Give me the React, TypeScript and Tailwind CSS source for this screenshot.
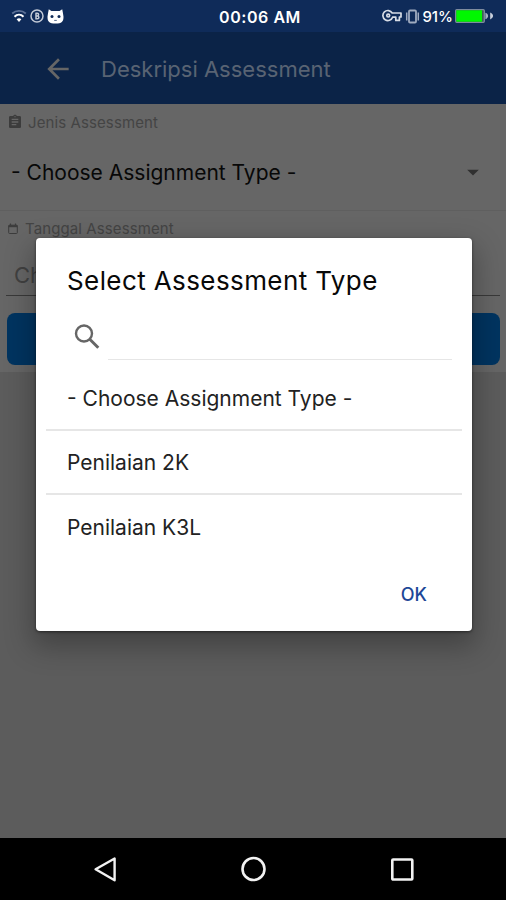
import { MdArrowBack, MdAssignment, MdArrowDropDown } from 'react-icons/md'

const options = ['- Choose Assignment Type -', 'Penilaian 2K', 'Penilaian K3L']

function WifiIcon() {
  return (
    <svg width="16" height="14" viewBox="0 0 16 14" fill="none">
      <path d="M1.2 4.5C5 1 11 1 14.8 4.5" stroke="#5b7096" strokeWidth="1.8" />
      <path d="M3.5 7.8c2.6-2.6 6.4-2.6 9 0" stroke="#fff" strokeWidth="2" />
      <path d="M5.6 10.3c1.5-1.3 3.3-1.3 4.8 0L8 13z" fill="#fff" />
    </svg>
  )
}

function DataIcon() {
  return (
    <svg width="14" height="14" viewBox="0 0 14 14" fill="none" stroke="#c3cad6">
      <circle cx="7" cy="7" r="6" strokeWidth="1.5" />
      <path d="M5.4 4.2h1.8a1.4 1.4 0 0 1 0 2.8H6M6 7h1.5a1.4 1.4 0 0 1 0 2.8H6V4" strokeWidth="1.5" />
    </svg>
  )
}

function RobotIcon() {
  return (
    <svg width="17" height="15" viewBox="0 0 17 15">
      <path d="M1.8.3 4.4 2h8.2L15.2.3l.7 3.4.6 4c0 5-1.7 6.8-8 6.8s-8-1.8-8-6.8l.6-4z" fill="#fff" />
      <circle cx="5" cy="7.6" r="1.5" fill="#0f2b59" />
      <circle cx="12" cy="7.6" r="1.5" fill="#0f2b59" />
      <path d="M7.2 11.4h2.6" stroke="#0f2b59" strokeWidth=".7" />
    </svg>
  )
}

function KeyIcon() {
  return (
    <svg width="20" height="14" viewBox="0 0 20 14" fill="none" stroke="#d8dde6" strokeWidth="1.7">
      <path d="M10.2 4H19v4h-1.6v3.4h-3.6V8.200h-3.200A5 5 0 1 1 10.2 4z" strokeLinejoin="round" />
      <circle cx="6.2" cy="6.6" r="1.4" />
    </svg>
  )
}

function VibrateIcon() {
  return (
    <svg width="15" height="15" viewBox="0 0 15 15" fill="none" stroke="#9fabc0">
      <rect x="4" y="1.5" width="7" height="12" rx="1" strokeWidth="1.8" />
      <path d="M1.7 3.5v8M13.3 3.5v8" strokeWidth="1.5" />
    </svg>
  )
}

function BatteryIcon() {
  return (
    <svg width="40" height="16" viewBox="0 0 40 16">
      <rect x=".7" y="1.7" width="28.6" height="12.6" rx="1" fill="#3c5c55" stroke="#7e8b9e" strokeWidth="1.3" />
      <rect x="1.3" y="2.3" width="25.7" height="11.4" fill="#00f800" />
      <path d="M30.4 4.8c3.6 1 3.6 5.400 0 6.400z" fill="#a6b0c2" />
      <path d="M35.200 4.600c3.800 1.600 3.800 5.200 0 6.800z" fill="#c9d0dc" />
    </svg>
  )
}

function CalendarIcon() {
  return (
    <svg width="12" height="12" viewBox="0 0 12 12" fill="none" stroke="#3c3c3c">
      <rect x="1.7" y="2.2" width="8.6" height="8.3" rx=".8" strokeWidth="1" />
      <path d="M1.5 3.2h9" strokeWidth="2" />
      <path d="M3.5.6v1.6M8.5.6v1.6" strokeWidth="1.2" />
    </svg>
  )
}

function SearchIcon() {
  return (
    <svg width="28" height="28" viewBox="0 0 28 28" fill="none" stroke="#666">
      <circle cx="11" cy="10.5" r="8" strokeWidth="2.4" />
      <path d="M16.5 16l8.8 8.8" strokeWidth="2.9" />
    </svg>
  )
}

export default function App() {
  return (
    <div className="relative flex h-[900px] w-[506px] flex-col overflow-hidden bg-[#5c5c5c] font-['Inter','Liberation_Sans',sans-serif]">
      <div className="grid h-8 grid-cols-3 items-center bg-[#0f2b59] text-white">
        <div className="flex items-center gap-[3px] pl-[11px]">
          <WifiIcon />
          <DataIcon />
          <RobotIcon />
        </div>
        <div className="pt-px pl-3.5 text-center text-base leading-none font-semibold tracking-[0.55px] whitespace-nowrap">00:06 AM</div>
        <div className="flex items-center justify-end pr-[11px]">
          <KeyIcon />
          <span className="ml-[3px]"><VibrateIcon /></span>
          <span className="ml-0.5 text-[15px] leading-none font-medium">91%</span>
          <span className="ml-0.5"><BatteryIcon /></span>
        </div>
      </div>

      <header className="flex h-[72px] items-center bg-[#0b2347] pt-0.5 pl-[42px] text-[#666]">
        <MdArrowBack size={32} />
        <h1 className="ml-[27px] text-[22px] text-[#596373]">Deskripsi Assessment</h1>
      </header>

      <main className="h-[268px] bg-[#666]">
        <div className="h-[107px] border-b border-[#5f5f5f]">
          <div className="flex h-[39px] items-center pl-[7px] text-[#3c3c3c]">
            <MdAssignment size={16} className="mb-[3px]" />
            <span className="ml-[5px] text-[15px] tracking-[0.1px] text-[#444]">Jenis Assessment</span>
          </div>
          <div className="flex h-[60px] items-center justify-between pr-[19px] pl-[11px]">
            <span className="text-[21px] text-[#080808]">- Choose Assignment Type -</span>
            <MdArrowDropDown size={28} className="mb-0.5 text-[#303030]" />
          </div>
        </div>
        <div className="flex h-9 items-center pl-[7px]">
          <CalendarIcon />
          <span className="ml-1.5 text-[15px] tracking-[0.1px] text-[#444]">Tanggal Assessment</span>
        </div>
        <div className="mx-1.5 flex h-[49px] items-center border-b-[1.5px] border-[#393939] pt-2 pl-2">
          <span className="text-[22px] text-[#414141]">Ch</span>
        </div>
        <div className="mr-1.5 ml-[7px] mt-[17px] h-[52px] rounded-lg bg-[#003460]" />
      </main>

      <div className="flex-1" />

      <nav className="flex h-[62px] items-center justify-between bg-black px-[92px]">
        <svg width="26" height="28" viewBox="0 0 26 28" fill="none" stroke="#f2f2f2" strokeWidth="2.4">
          <path d="M22.6 3.5v21.8L3.6 14.3z" strokeLinejoin="round" />
        </svg>
        <svg width="28" height="28" viewBox="0 0 28 28" fill="none" stroke="#f2f2f2" strokeWidth="2.6">
          <circle cx="13.5" cy="14" r="11" />
        </svg>
        <svg width="24" height="28" viewBox="0 0 24 28" fill="none" stroke="#f2f2f2" strokeWidth="2.6">
          <rect x="2.3" y="4.5" width="20" height="20" rx=".8" />
        </svg>
      </nav>

      <div role="dialog" className="absolute top-[238px] left-9 flex h-[393px] w-[436px] flex-col rounded bg-white shadow-[0_12px_28px_4px_rgba(0,0,0,0.28),0_1px_3px_rgba(0,0,0,0.5)]">
        <h2 className="mt-[27px] pl-[31px] text-[26px] leading-8 tracking-[0.4px] whitespace-nowrap text-[#080808]">Select Assessment Type</h2>
        <div className="mt-5 ml-[37px] flex h-[43px] items-start">
          <span className="mt-1.5"><SearchIcon /></span>
          <div className="ml-[7px] h-full w-[344px] border-b border-[#e6e6e6]" />
        </div>
        <ul className="mx-2.5 mt-[7px] divide-y-2 divide-[#e6e6e6]">
          {options.map((option) => (
            <li key={option} className="flex h-16 items-center pt-px pl-[21px] text-[21px] text-[#222]">
              {option}
            </li>
          ))}
        </ul>
        <button className="mt-[22px] mr-[45px] self-end text-[18px] leading-7 font-medium text-[#1d4797]">OK</button>
      </div>
    </div>
  )
}
